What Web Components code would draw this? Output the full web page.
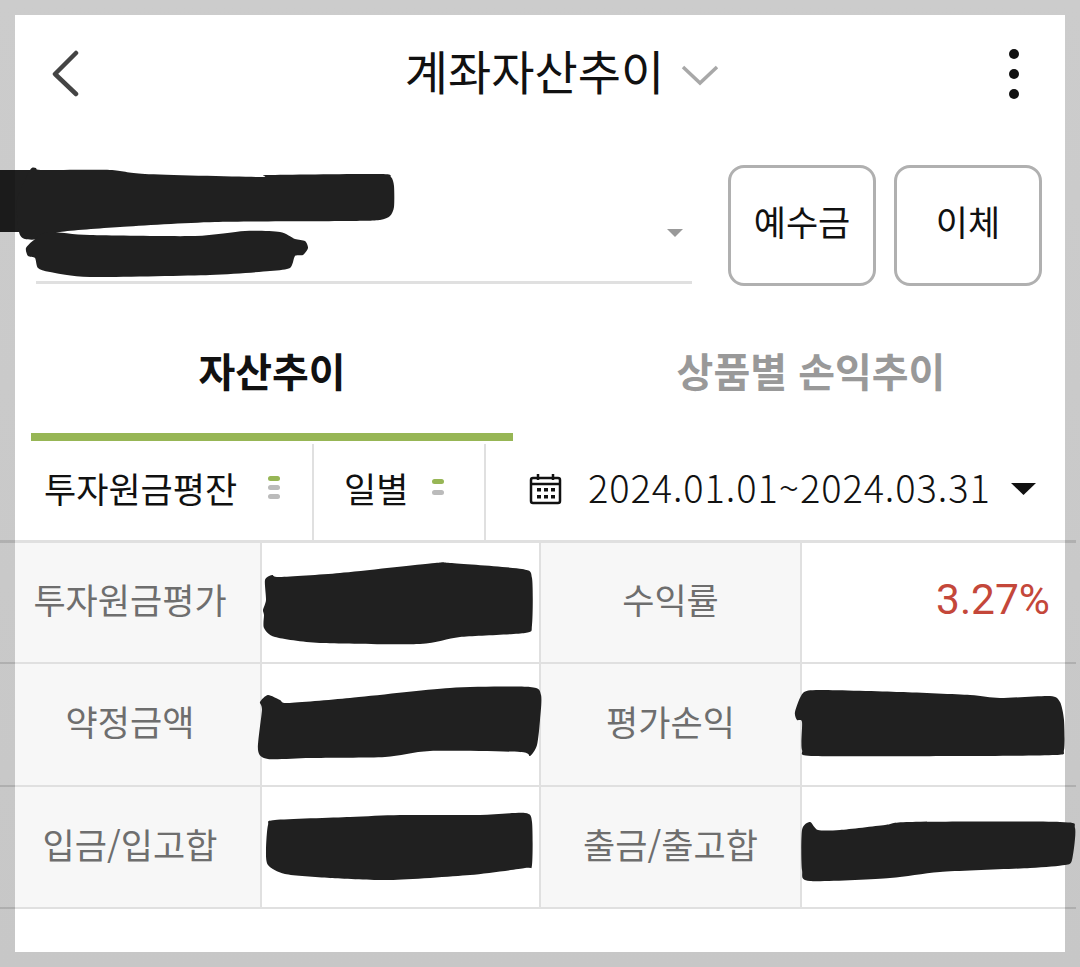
<!DOCTYPE html>
<html lang="ko"><head><meta charset="utf-8"><title>계좌자산추이</title>
<style>
html,body{margin:0;padding:0;height:967px;overflow:hidden}
body{background:linear-gradient(#cccccc,#c7c7c7);font-family:"Noto Sans CJK KR","Noto Sans",sans-serif;color:#111;position:relative}
</style></head><body>
<app-panel>
  <top-bar title-text="계좌자산추이"></top-bar>
  <account-row><action-button>예수금</action-button><action-button>이체</action-button></account-row>
  <tab-bar first="자산추이" second="상품별 손익추이"></tab-bar>
  <filter-bar></filter-bar>
  <table-rule style="height:3px"></table-rule>
  <data-row l1="투자원금평가" l2="수익률" v2="3.27%" style="height:119px"></data-row>
  <table-rule></table-rule>
  <data-row l1="약정금액" l2="평가손익" style="height:121px"></data-row>
  <table-rule></table-rule>
  <data-row l1="입금/입고합" l2="출금/출고합"></data-row>
  <table-rule></table-rule>
</app-panel>
<redaction-layer></redaction-layer>
<script>
const def=(name,css,html)=>customElements.define(name,class extends HTMLElement{
  connectedCallback(){const r=this.attachShadow({mode:'open'});
    r.innerHTML=`<style>${css}</style>`+(typeof html==='function'?html(this):html);}
});
const smooth=p=>{const n=p.length;let d=`M${p[0][0]} ${p[0][1]}`;
  for(let i=0;i<n;i++){const a=p[(i-1+n)%n],b=p[i],c=p[(i+1)%n],e=p[(i+2)%n];
    const k=0.12;
    d+=`C${b[0]+(c[0]-a[0])*k} ${b[1]+(c[1]-a[1])*k} ${c[0]-(e[0]-b[0])*k} ${c[1]-(e[1]-b[1])*k} ${c[0]} ${c[1]}`;}
  return d+'Z';};
const blobs=[
 [[30,170],[36,168],[42,170],[110,170],[145,174],[260,177],[268,175],[380,174],[391,177],[394,186],[394,207],[390,216],[380,220],[350,221],[215,222],[120,227],[60,232],[40,239],[25,239],[19,232],[17,200]],
 [[26,248],[34,240],[48,232],[90,235],[195,236],[245,231],[280,232],[295,239],[305,241],[308,248],[303,255],[295,256],[290,268],[270,271],[210,275],[90,277],[50,272],[38,268],[35,258],[28,256]],
 [[265,580],[272,575],[280,577],[340,573],[435,563],[450,563],[522,569],[532,578],[532,625],[525,633],[460,637],[420,644],[320,643],[275,637],[264,628],[264,615],[263,610],[266,600]],
 [[260,702],[268,695],[280,700],[288,703],[350,698],[450,688],[530,687],[541,695],[540,720],[537,745],[530,756],[520,752],[430,751],[385,757],[310,758],[268,759],[258,750],[262,710]],
 [[268,825],[275,820],[350,817],[400,815],[480,815],[525,813],[532,822],[532,865],[525,868],[470,875],[390,880],[330,878],[285,874],[268,865],[266,850]],
 [[795,712],[803,693],[820,690],[900,692],[970,695],[1000,698],[1050,696],[1060,702],[1064,720],[1064,750],[1055,755],[960,756],[815,756],[802,750],[802,722],[797,720]],
 [[802,830],[810,822],[818,830],[840,830],[885,825],[910,822],[1060,822],[1075,828],[1072,860],[1065,865],[1030,868],[940,872],[890,878],[810,881],[802,870]]
];
def('app-panel',`:host{display:block;box-sizing:border-box;margin:15px 15px 0;height:937px;background:#fff}`,`<slot></slot>`);
def('top-bar',`:host{display:flex;align-items:center;justify-content:space-between;height:120px;box-sizing:border-box;padding:0 45px 0 36px}
 .mid{display:flex;align-items:center;gap:17px;margin-left:37px}
 .t{font-size:47px;line-height:60px;color:#111;margin-top:-11px}
 svg{display:block}`,
 h=>`<svg width="30" height="50" viewBox="0 0 30 50"><path d="M25 3 L4 24 L25 44" fill="none" stroke="#444" stroke-width="4.5" stroke-linecap="round" stroke-linejoin="round"/></svg>
 <div class="mid"><span class="t">${h.getAttribute('title-text')}</span><svg width="38" height="22" viewBox="0 0 38 22" style="margin-right:2px"><path d="M2 3 L19 19 L36 3" fill="none" stroke="#a8a8a8" stroke-width="3.5"/></svg></div>
 <svg width="12" height="52" viewBox="0 0 12 52" style="margin-top:-2px"><circle cx="6" cy="6" r="5" fill="#111"/><circle cx="6" cy="26" r="5" fill="#111"/><circle cx="6" cy="46" r="5" fill="#111"/></svg>`);
def('account-row',`:host{display:flex;box-sizing:border-box;height:166px;padding:30px 23px 0 21px;gap:36px}
 .sel{width:656px;height:119px;box-sizing:border-box;border-bottom:3px solid #e0e0e0;display:flex;justify-content:flex-end;align-items:flex-end;padding:0 9px 44px 0}
 .btns{display:flex;gap:18px}`,
 `<div class="sel"><svg width="16" height="8" viewBox="0 0 16 8"><path d="M0 0H16L8 8Z" fill="#999"/></svg></div><div class="btns"><slot></slot></div>`);
def('action-button',`:host{display:flex;align-items:center;justify-content:center;box-sizing:border-box;width:148px;height:121px;border:3px solid #b0b0b0;border-radius:16px;font-size:35px;color:#111;padding-bottom:10px}`,`<slot></slot>`);
def('tab-bar',`:host{display:flex;height:140px;box-sizing:border-box;padding-left:16px}
 .tab{flex:none;height:132px;display:flex;align-items:center;justify-content:center;font-size:40px;font-weight:700;box-sizing:border-box}
 .a{width:482px;border-bottom:8px solid #97b655;height:140px;color:#111;padding-top:6px}
 .b{color:#999;width:552px;padding-left:44px;padding-top:6px}`,
 h=>`<div class="tab a">${h.getAttribute('first')}</div><div class="tab b">${h.getAttribute('second')}</div>`);
def('filter-bar',`:host{display:flex;height:99px;padding-top:3px;box-sizing:border-box;font-size:35px;color:#111}
 .c{display:flex;align-items:center;box-sizing:border-box;border-right:2px solid #e0e0e0;padding-bottom:10px}
 .c1{width:299px;padding-left:29px}.c2{width:172px;padding-left:30px}
 .c3{flex:1;padding:0 29px 0 43px;border:0;justify-content:space-between;padding-top:0;padding-bottom:6px}
 .date{font-size:38px;font-weight:300;letter-spacing:.9px;margin-left:25px;margin-right:auto;line-height:1;padding-bottom:4px}
 .p{display:flex;flex-direction:column;gap:4px;margin-left:auto;margin-right:32px}
 .c2 .p{margin-right:40px;gap:6px}
 .p i{display:block;width:12px;height:5px;border-radius:3px;background:#bbb}.p i:first-child{background:#97b655}`,
 `<div class="c c1">투자원금평잔<span class="p"><i></i><i></i><i></i></span></div>
  <div class="c c2">일별<span class="p"><i></i><i></i></span></div>
  <div class="c c3"><svg width="34" height="32" viewBox="0 0 34 32"><rect x="2" y="5" width="29" height="25" rx="2" fill="none" stroke="#111" stroke-width="2.5"/><path d="M2 11H31M9 1V7M24 1V7" stroke="#111" stroke-width="2.5"/><g fill="#111"><rect x="8" y="15" width="4" height="3.5"/><rect x="15" y="15" width="4" height="3.5"/><rect x="22" y="15" width="4" height="3.5"/><rect x="8" y="22" width="4" height="3.5"/><rect x="15" y="22" width="4" height="3.5"/><rect x="22" y="22" width="4" height="3.5"/></g></svg>
  <span class="date">2024.01.01~2024.03.31</span><svg width="25" height="12" viewBox="0 0 25 12"><path d="M0 0H25L12.5 12Z" fill="#111"/></svg></div>`);
def('table-rule',`:host{display:block;height:2px;margin:0 -11px 0 -15px;background:rgba(0,0,0,.12)}`,``);
def('data-row',`:host{display:grid;grid-template-columns:245px 281px 259px 265px;height:120px;font-size:35px;color:#6e6e6e}
 .l{background:#f7f7f7;display:flex;align-items:center;justify-content:center;padding-bottom:8px;box-sizing:border-box}
 .l1{padding-right:15px}
 .v{border-left:2px solid #e0e0e0;border-right:2px solid #e0e0e0;box-sizing:border-box}
 .r{border-left:2px solid #e0e0e0;color:#c4473a;font-family:Roboto,sans-serif;font-size:42.5px;display:flex;align-items:center;justify-content:flex-end;padding:0 15px 6px 0;box-sizing:border-box}`,
 h=>`<div class="l l1">${h.getAttribute('l1')}</div><div class="v"></div><div class="l">${h.getAttribute('l2')}</div><div class="r">${h.getAttribute('v2')||''}</div>`);
def('redaction-layer',`:host{position:absolute;inset:0;display:block;pointer-events:none}svg{display:block}
 path{fill:#202020}`,
 `<svg width="1080" height="967" viewBox="0 0 1080 967"><rect x="0" y="170" width="15" height="62" fill="#1b1b1b"/><rect x="15" y="170" width="20" height="62" fill="#202020"/>${blobs.map(b=>`<path d="${smooth(b)}"/>`).join('')}</svg>`);
</script>
</body></html>
